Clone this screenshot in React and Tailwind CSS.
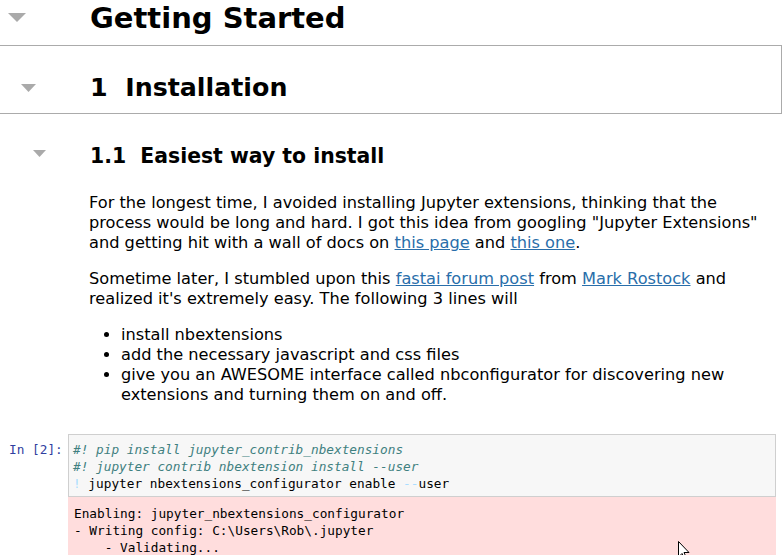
import React from "react";

const Tri = ({ className }) => (
  <svg className={className} width="18" height="9" viewBox="0 0 18 9">
    <polygon points="0,0 18,0 9,9" fill="#aaaaaa" />
  </svg>
);

const link = "text-[#296eaa] underline";

export default function App() {
  return (
    <div className="relative w-[782px] h-[555px] overflow-hidden bg-white text-black font-['DejaVu_Sans',Verdana,sans-serif]">
      {/* Getting Started */}
      <div className="flex items-start h-[46px] border-b border-[#ababab]">
        <div className="w-[90px] shrink-0 pl-[8px] pt-[13px]">
          <Tri className="" />
        </div>
        <h1 className="text-[29px] font-bold leading-[36px] pt-0">Getting Started</h1>
      </div>

      {/* 1 Installation */}
      <div className="flex items-start h-[68px] border-b border-r border-[#ababab] w-[782px]">
        <div className="w-[90px] shrink-0 pl-[21px] pt-[38px]">
          <svg width="15" height="8" viewBox="0 0 15 8">
            <polygon points="0,0 15,0 7.5,8" fill="#aaaaaa" />
          </svg>
        </div>
        <h2 className="text-[25.3px] font-bold leading-[32px] pt-[26px] whitespace-pre">1  Installation</h2>
      </div>

      {/* 1.1 */}
      <div className="flex items-start">
        <div className="w-[90px] shrink-0 pl-[33px] pt-[36px]">
          <svg width="13" height="7" viewBox="0 0 13 7">
            <polygon points="0,0 13,0 6.5,7" fill="#aaaaaa" />
          </svg>
        </div>
        <div className="flex-1 pt-[27px] pr-[20px]">
          <h3 className="text-[20.4px] font-bold leading-[30px] whitespace-pre">1.1  Easiest way to install</h3>
          <div className="text-[16.2px] leading-[20px] -ml-px pt-[22px]">
            <p>
              For the longest time, I avoided installing Jupyter extensions, thinking that the process would be long and hard. I got this idea from googling "Jupyter Extensions" and getting hit with a wall of docs on{" "}
              <span className={link}>this page</span> and <span className={link}>this one</span>.
            </p>
            <p className="mt-[16px]">
              Sometime later, I stumbled upon this <span className={link}>fastai forum post</span> from{" "}
              <span className={link}>Mark Rostock</span> and realized it's extremely easy. The following 3 lines will
            </p>
            <ul className="mt-[16px] pl-[32px] list-disc">
              <li>install nbextensions</li>
              <li>add the necessary javascript and css files</li>
              <li>give you an AWESOME interface called nbconfigurator for discovering new extensions and turning them on and off.</li>
            </ul>
          </div>
        </div>
      </div>

      {/* Code cell */}
      <div className="flex items-start mt-[29px] font-['DejaVu_Sans_Mono','Liberation_Mono',monospace] text-[12.75px] leading-[17px]">
        <div className="w-[68px] shrink-0 pl-[9px] pt-[7px] text-[#303f9f]">In [2]:</div>
        <div className="w-[708px]">
          <div className="bg-[#f7f7f7] border border-[#cfcfcf] px-[4px] pt-[6px] pb-[4px] whitespace-pre">
            <div className="italic text-[#408080]">#! pip install jupyter_contrib_nbextensions</div>
            <div className="italic text-[#408080]">#! jupyter contrib nbextension install --user</div>
            <div>
              <span className="text-[#aaddff]">!</span> jupyter nbextensions_configurator enable <span className="text-[#aaddff]">--</span>user
            </div>
          </div>
          <div className="bg-[#ffdddd] px-[6px] pt-[8px] pb-[10px] whitespace-pre">
            <div>Enabling: jupyter_nbextensions_configurator</div>
            <div>- Writing config: C:\Users\Rob\.jupyter</div>
            <div>    - Validating...</div>
          </div>
        </div>
      </div>

      {/* mouse cursor */}
      <svg className="absolute left-[678px] top-[541px]" width="12" height="19" viewBox="0 0 12 19">
        <path d="M0.5 0.5 L0.5 16 L4 12.5 L6.5 18 L8.5 17 L6 11.5 L11 11.5 Z" fill="#fff" stroke="#000" strokeWidth="1" />
      </svg>
    </div>
  );
}
